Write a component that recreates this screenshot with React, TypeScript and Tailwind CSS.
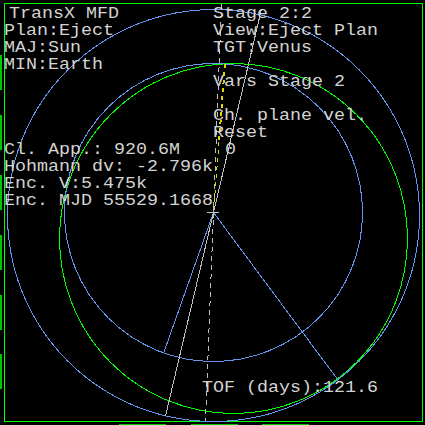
type Line = { text: string; x: string };

const leftRows: Line[] = [
  { text: "TransX MFD", x: "ml-[5px]" },
  { text: "Plan:Eject", x: "" },
  { text: "MAJ:Sun", x: "" },
  { text: "MIN:Earth", x: "" },
  { text: "", x: "" },
  { text: "", x: "" },
  { text: "", x: "" },
  { text: "", x: "" },
  { text: "Cl. App.: 920.6M", x: "" },
  { text: "Hohmann dv: -2.796k", x: "" },
  { text: "Enc. V:5.475k", x: "" },
  { text: "Enc. MJD 55529.1668", x: "" },
];

const rightRows: Line[] = [
  { text: "Stage 2:2", x: "" },
  { text: "View:Eject Plan", x: "" },
  { text: "TGT:Venus", x: "" },
  { text: "", x: "" },
  { text: "Vars Stage 2", x: "" },
  { text: "", x: "" },
  { text: "Ch. plane vel.", x: "" },
  { text: "Reset", x: "" },
  { text: "0", x: "ml-[12px]" },
];

function Row({ text, x }: Line) {
  return <div className={`h-[17px] origin-left scale-x-[1.1458] whitespace-pre ${x}`}>{text}</div>;
}

function Orbits() {
  return (
    <svg className="absolute inset-0" width="425" height="425" fill="none" shapeRendering="crispEdges">
      <g fill="#00c800">
        {[55, 115, 175, 235, 295, 354].map((y) => (
          <rect key={y} x="0" y={y} width="2" height="35" />
        ))}
        {[119, 191, 262].map((x) => (
          <rect key={x} x={x} y="424" width="47" height="1" />
        ))}
      </g>
      <rect x="4.5" y="3.5" width="418" height="418" stroke="#00ff00" />
      <ellipse cx="233.5" cy="238.5" rx="174" ry="175" stroke="#00ff00" />
      <circle cx="213.5" cy="215.5" r="206" stroke="#6495ed" />
      <circle cx="213.5" cy="212.5" r="149" stroke="#6495ed" />
      <path d="M164 352L213.5 212.5L338 380" stroke="#6495ed" />
      <path d="M261.5 9L213.5 212.5L165.5 416" stroke="#c0c0c0" />
      <path d="M221.5 3L205.5 421" stroke="#c0c0c0" strokeDasharray="5 4" strokeDashoffset="-1" />
      <path d="M225 64L219 142" stroke="#d8d800" strokeWidth="2" strokeDasharray="4 4" />
      <path d="M219 142L213.5 212" stroke="#d8d800" strokeDasharray="4 4" />
      <path d="M207 212.5H219M213.5 207V218" stroke="#c0c0c0" />
    </svg>
  );
}

export default function App() {
  return (
    <main className="relative h-[425px] w-[425px] overflow-hidden bg-black font-['Courier_New','Liberation_Mono',monospace] text-[16px] leading-[17px] text-[#d3d3d3]">
      <Orbits />
      <div className="relative flex h-full flex-col pt-[6px] pl-1">
        <div className="flex">
          <div className="w-[209px]">
            {leftRows.map((row, i) => <Row key={i} {...row} />)}
          </div>
          <div className="w-[190px]">
            {rightRows.map((row, i) => <Row key={i} {...row} />)}
          </div>
        </div>
        <div className="mt-[170px] pl-[198px]">
          <Row text="TOF (days):121.6" x="" />
        </div>
      </div>
    </main>
  );
}
